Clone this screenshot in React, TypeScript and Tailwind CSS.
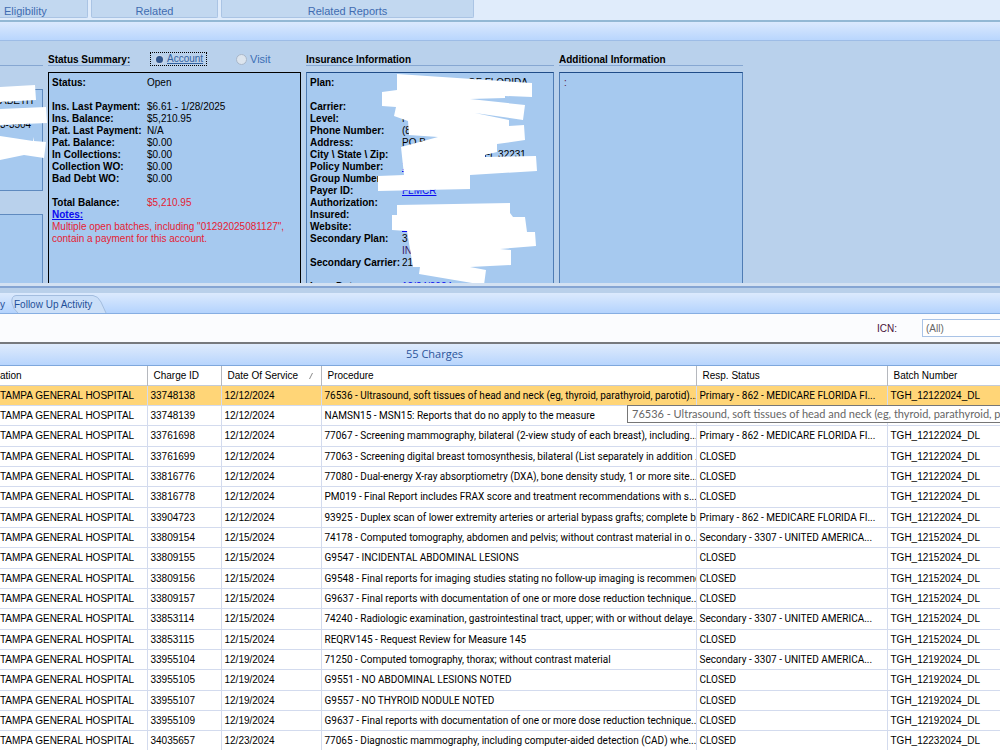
import type { ReactNode } from "react";
import { useState } from "react";

type Charge = {
  id: string;
  date: string;
  procedure: string;
  status: string;
  batch: string;
};

const FACILITY = "TAMPA GENERAL HOSPITAL";
const MEDICARE = "Primary - 862 - MEDICARE FLORIDA FI...";
const UNITED = "Secondary - 3307 - UNITED AMERICA...";

const CHARGES: Charge[] = [
  { id: "33748138", date: "12/12/2024", procedure: "76536 - Ultrasound, soft tissues of head and neck (eg, thyroid, parathyroid, parotid)...", status: MEDICARE, batch: "TGH_12122024_DL" },
  { id: "33748139", date: "12/12/2024", procedure: "NAMSN15 - MSN15: Reports that do no apply to the measure", status: "", batch: "" },
  { id: "33761698", date: "12/12/2024", procedure: "77067 - Screening mammography, bilateral (2-view study of each breast), including...", status: MEDICARE, batch: "TGH_12122024_DL" },
  { id: "33761699", date: "12/12/2024", procedure: "77063 - Screening digital breast tomosynthesis, bilateral (List separately in addition ...", status: "CLOSED", batch: "TGH_12122024_DL" },
  { id: "33816776", date: "12/12/2024", procedure: "77080 - Dual-energy X-ray absorptiometry (DXA), bone density study, 1 or more site...", status: "CLOSED", batch: "TGH_12122024_DL" },
  { id: "33816778", date: "12/12/2024", procedure: "PM019 - Final Report includes FRAX score and treatment recommendations with s...", status: "CLOSED", batch: "TGH_12122024_DL" },
  { id: "33904723", date: "12/12/2024", procedure: "93925 - Duplex scan of lower extremity arteries or arterial bypass grafts; complete b...", status: MEDICARE, batch: "TGH_12122024_DL" },
  { id: "33809154", date: "12/15/2024", procedure: "74178 - Computed tomography, abdomen and pelvis; without contrast material in o...", status: UNITED, batch: "TGH_12152024_DL" },
  { id: "33809155", date: "12/15/2024", procedure: "G9547 - INCIDENTAL ABDOMINAL LESIONS", status: "CLOSED", batch: "TGH_12152024_DL" },
  { id: "33809156", date: "12/15/2024", procedure: "G9548 - Final reports for imaging studies stating no follow-up imaging is recommend...", status: "CLOSED", batch: "TGH_12152024_DL" },
  { id: "33809157", date: "12/15/2024", procedure: "G9637 - Final reports with documentation of one or more dose reduction technique...", status: "CLOSED", batch: "TGH_12152024_DL" },
  { id: "33853114", date: "12/15/2024", procedure: "74240 - Radiologic examination, gastrointestinal tract, upper; with or without delaye...", status: UNITED, batch: "TGH_12152024_DL" },
  { id: "33853115", date: "12/15/2024", procedure: "REQRV145 - Request Review for Measure 145", status: "CLOSED", batch: "TGH_12152024_DL" },
  { id: "33955104", date: "12/19/2024", procedure: "71250 - Computed tomography, thorax; without contrast material", status: UNITED, batch: "TGH_12192024_DL" },
  { id: "33955105", date: "12/19/2024", procedure: "G9551 - NO ABDOMINAL LESIONS NOTED", status: "CLOSED", batch: "TGH_12192024_DL" },
  { id: "33955107", date: "12/19/2024", procedure: "G9557 - NO THYROID NODULE NOTED", status: "CLOSED", batch: "TGH_12192024_DL" },
  { id: "33955109", date: "12/19/2024", procedure: "G9637 - Final reports with documentation of one or more dose reduction technique...", status: "CLOSED", batch: "TGH_12192024_DL" },
  { id: "34035657", date: "12/23/2024", procedure: "77065 - Diagnostic mammography, including computer-aided detection (CAD) whe...", status: "CLOSED", batch: "TGH_12232024_DL" },
];

const STATUS_ROWS = [
  ["Status:", "Open"],
  ["", ""],
  ["Ins. Last Payment:", "$6.61 - 1/28/2025"],
  ["Ins. Balance:", "$5,210.95"],
  ["Pat. Last Payment:", "N/A"],
  ["Pat. Balance:", "$0.00"],
  ["In Collections:", "$0.00"],
  ["Collection WO:", "$0.00"],
  ["Bad Debt WO:", "$0.00"],
];

export default function App() {
  return (
    <div className="overflow-hidden bg-white font-['Liberation_Sans',Arial,sans-serif] text-[10px] text-black">
      <Ribbon />
      <div className="h-[19px] border-b border-[#9dbce6] bg-linear-to-b from-[#dbe9fd] to-[#b9d6fd]" />
      <AccountPanels />
      <div className="h-2.5 border-t-[3px] border-b-[5px] border-t-[#d3e1f2] border-b-[#b9d0ea] bg-[#85a5d3]" />
      <ActivityTabs />
      <FilterBar />
      <div className="h-[22px] border-b border-[#7ea7dc] bg-linear-to-b from-[#dfebfc] to-[#b8d5fd] pl-[406px] font-['Open_Sans',sans-serif] text-[11px] leading-5 text-[#2b559b]">
        55 Charges
      </div>
      <ChargeTable />
    </div>
  );
}

function Ribbon() {
  return (
    <div className="flex h-[22px] items-start gap-[3px] border-b-2 border-[#93b8d4] bg-[#e0ecfb] text-[11px] leading-4 text-[#3f6cb1]">
      <div className="h-[18px] w-[88px] rounded-br-xs border-r border-b border-[#aac4e4] bg-[#c2d8f0] pt-[3px] pl-1">Eligibility</div>
      <div className="h-[18px] w-[127px] rounded-b-xs border-x border-b border-[#aac4e4] bg-[#c2d8f0] pt-[3px] text-center">Related</div>
      <div className="h-[18px] w-[253px] rounded-b-xs border-x border-b border-[#aac4e4] bg-[#c2d8f0] pt-[3px] text-center">Related Reports</div>
    </div>
  );
}

function AccountPanels() {
  const [scope, setScope] = useState("account");

  return (
    <section className="relative flex h-[242px] gap-[5px] overflow-hidden bg-[#b9d1ec] pt-[11px] leading-3">
      <div className="flex w-[43px] shrink-0 flex-col">
        <div className="h-3.5 border-b border-[#86a7d2]" />
        <div className="mt-[23px] h-[102px] border-t border-r border-b border-[#5f8abf] bg-[#a6c9ef] pt-[5px]">
          <div className="h-6">ABETH</div>
          <div>3-3504</div>
        </div>
        <div className="mt-[23px] flex-1 border-t border-r border-[#5f8abf] bg-[#a6c9ef]" />
      </div>

      <div className="flex w-[253px] shrink-0 flex-col">
        <div className="flex h-5 items-start">
          <h2 className="h-3.5 w-[82px] border-b border-[#86a7d2] pt-0.5 font-bold whitespace-nowrap">Status Summary:</h2>
          <label className="ml-5 flex h-3.5 w-[57px] items-center gap-0.5 border border-dotted border-black pl-[3px] text-[#34629f] underline">
            <RadioDot checked={scope === "account"} onChange={() => setScope("account")} />
            Account
          </label>
          <label className="ml-[29px] flex h-3.5 items-center gap-[3px] text-[11px] text-[#3c6fb5]">
            <RadioDot checked={scope === "visit"} onChange={() => setScope("visit")} />
            Visit
          </label>
        </div>
        <div className="flex-1 border border-b-0 border-black bg-[#a6c9ef] px-[3px] pt-1">
          {STATUS_ROWS.map(([label, value], index) => <InfoRow key={index} label={label} width="w-[95px]">{value}</InfoRow>)}
          <div className="h-3" />
          <InfoRow label="Total Balance:" width="w-[95px]"><span className="text-[#e52233]">$5,210.95</span></InfoRow>
          <a className="block font-bold text-[#0b0bf0] underline" href="#notes">Notes:</a>
          <p className="whitespace-nowrap text-[#e52233]">
            Multiple open batches, including "01292025081127",<br />
            contain a payment for this account.
          </p>
        </div>
      </div>

      <Panel title="Insurance Information" width="w-[248px]">
        <InfoRow label="Plan:"><span className="pl-[66px]">OF FLORIDA</span></InfoRow>
        <InfoRow label="" />
        <InfoRow label="Carrier:" />
        <InfoRow label="Level:">P</InfoRow>
        <InfoRow label="Phone Number:">(8</InfoRow>
        <InfoRow label="Address:">PO B</InfoRow>
        <InfoRow label="City \ State \ Zip:"><span className="pl-[82px]">FL 32231</span></InfoRow>
        <InfoRow label="Policy Number:"><a className="text-[#0b0bf0] underline" href="#policy">1H</a></InfoRow>
        <InfoRow label="Group Number:" />
        <InfoRow label="Payer ID:"><a className="text-[#0b0bf0] underline" href="#payer">FLMCR</a></InfoRow>
        <InfoRow label="Authorization:" />
        <InfoRow label="Insured:" />
        <InfoRow label="Website:"><a className="text-[#0b0bf0] underline" href="#website">w</a></InfoRow>
        <InfoRow label="Secondary Plan:">3</InfoRow>
        <InfoRow label=""><span className="text-[#3a1763]">IN</span></InfoRow>
        <InfoRow label="Secondary Carrier:">21</InfoRow>
        <InfoRow label="" />
        <InfoRow label="Loss Date:"><a className="text-[#0b0bf0] underline" href="#loss">12/24/2024</a></InfoRow>
      </Panel>

      <Panel title="Additional Information" width="w-[184px]">
        <span className="pl-px text-[#5a1a3a]">:</span>
      </Panel>

      <Redactions />
    </section>
  );
}

function RadioDot({ checked, onChange }: { checked: boolean; onChange: () => void }) {
  return (
    <input
      className="m-0 size-[11px] shrink-0 appearance-none rounded-full border border-[#a9b7c9] bg-[#dde5ee] checked:border-2 checked:border-[#c4d4e8] checked:bg-[#30558c]"
      type="radio"
      name="scope"
      checked={checked}
      onChange={onChange}
    />
  );
}

function Panel({ title, width, children }: { title: string; width: string; children: ReactNode }) {
  return (
    <div className={`flex shrink-0 flex-col ${width}`}>
      <h2 className="mb-1.5 h-3.5 border-b border-[#86a7d2] pt-0.5 font-bold whitespace-nowrap">{title}</h2>
      <div className="flex-1 border border-b-0 border-[#4f7cb4] border-t-[#1f4c88] bg-[#a6c9ef] px-[3px] pt-1">{children}</div>
    </div>
  );
}

function InfoRow({ label, width = "w-[92px]", children }: { label: string; width?: string; children?: ReactNode }) {
  return (
    <div className="flex h-3 whitespace-nowrap">
      <span className={`shrink-0 font-bold ${width}`}>{label}</span>
      <span>{children}</span>
    </div>
  );
}

// White strokes painted over the private fields, drawn in page coordinates.
function Redactions() {
  return (
    <svg className="pointer-events-none absolute top-0 left-0" width="560" height="242" viewBox="0 41 560 242" fill="#fff">
      <path d="M0 87 35 85 36 100 0 102zM0 109 46 107 47 123 0 125zM0 136 33 141 34 137 34 141 46 142 44 158 24 155 0 160z" />
      <path d="M397 74 532 83 532 97 505 96 505 98 470 99 525 105 523 120 475 113 509 120 509 126 524 125 525 140 497 144 497 152 485 155 485 157 536 156 537 171 470 175 470 189 378 191 378 176 404 175 401 147 438 137 409 135 408 121 394 116 396 107 382 106 382 92 397 90z" />
      <path d="M397 205 510 203 510 213 513 217 525 217 527 232 535 232 536 246 500 249 511 250 511 265 470 267 486 270 484 285 419 274 420 267 413 267 407 231 392 230 392 215 397 215z" />
      <path d="M493 283v2m4-2v2m4-2v2m4-2v2m4-2v2m4-2v2m4-2v2m4-2v2" stroke="#000" strokeWidth="2" />
    </svg>
  );
}

function ActivityTabs() {
  return (
    <nav className="flex h-[21px] items-end border-b border-[#86aee2] bg-linear-to-b from-[#dceafd] to-[#b4d3fd] text-[#1f4f99]">
      <button className="h-[18px] w-[11px] text-left" type="button">y</button>
      <button className="relative h-[18px] w-[96px] text-left whitespace-nowrap" type="button">
        <svg className="absolute inset-0" width="96" height="18" viewBox="0 0 96 18" fill="#cbdff8" stroke="#a3bddf">
          <path d="M7 18Q2 14 1 8 0 1 5 .5H82Q87 1 90 7L95 18" />
        </svg>
        <span className="relative pl-[3px]">Follow Up Activity</span>
      </button>
    </nav>
  );
}

function FilterBar() {
  return (
    <div className="flex h-[30px] items-center justify-end border-b-2 border-[#77797d] bg-[#fbfcfe]">
      <label className="w-[45px] text-[#4a1238]" htmlFor="icn">ICN:</label>
      <input className="h-[18px] w-[78px] border border-r-0 border-[#a9c3e6] bg-white px-[3px] text-[#666] outline-none" id="icn" defaultValue="(All)" />
    </div>
  );
}

function ChargeTable() {
  return (
    <div className="relative">
      <table className="w-full table-fixed border-collapse text-left whitespace-nowrap">
        <colgroup>
          <col className="w-[147px]" />
          <col className="w-[74px]" />
          <col className="w-[100px]" />
          <col className="w-[375px]" />
          <col className="w-[191px]" />
          <col />
        </colgroup>
        <thead>
          <tr className="h-[19px] border-b border-[#c3cbd8]">
            <HeaderCell>ation</HeaderCell>
            <HeaderCell>Charge ID</HeaderCell>
            <HeaderCell>
              <span className="flex items-center justify-between pr-2">
                Date Of Service
                <svg width="4" height="6" viewBox="0 0 4 6" stroke="#8a8a8a"><path d="M.5 6 3.5 0" /></svg>
              </span>
            </HeaderCell>
            <HeaderCell>Procedure</HeaderCell>
            <HeaderCell>Resp. Status</HeaderCell>
            <HeaderCell>Batch Number</HeaderCell>
          </tr>
        </thead>
        <tbody>
          {CHARGES.map((charge) => (
            <tr key={charge.id} className="h-5 border-b border-[#d3dbee] first:bg-[#ffd577] nth-[3n]:h-[21px]">
              <Cell>{FACILITY}</Cell>
              <Cell>{charge.id}</Cell>
              <Cell>{charge.date}</Cell>
              <Cell><span className="font-[Roboto,sans-serif]">{charge.procedure}</span></Cell>
              <Cell><span className="font-[Roboto,sans-serif]">{charge.status}</span></Cell>
              <Cell>{charge.batch}</Cell>
            </tr>
          ))}
        </tbody>
      </table>
      <div className="absolute top-[39px] right-0 left-[627px] h-[18px] overflow-hidden border border-r-0 border-[#767676] bg-white pl-1 font-[Lato,sans-serif] text-[11px] leading-4 whitespace-nowrap text-[#666]" role="tooltip">
        76536 - Ultrasound, soft tissues of head and neck (eg, thyroid, parathyroid, p
      </div>
    </div>
  );
}

function HeaderCell({ children }: { children: ReactNode }) {
  return <th className="overflow-hidden border-r border-[#b5b8be] p-0 pt-px pl-1.5 font-normal first:pl-0 last:border-r-0">{children}</th>;
}

function Cell({ children }: { children: ReactNode }) {
  return <td className="overflow-hidden border-r border-[#d3dbee] p-0 pt-px pl-[3px] leading-4 first:pl-0 last:border-r-0">{children}</td>;
}
